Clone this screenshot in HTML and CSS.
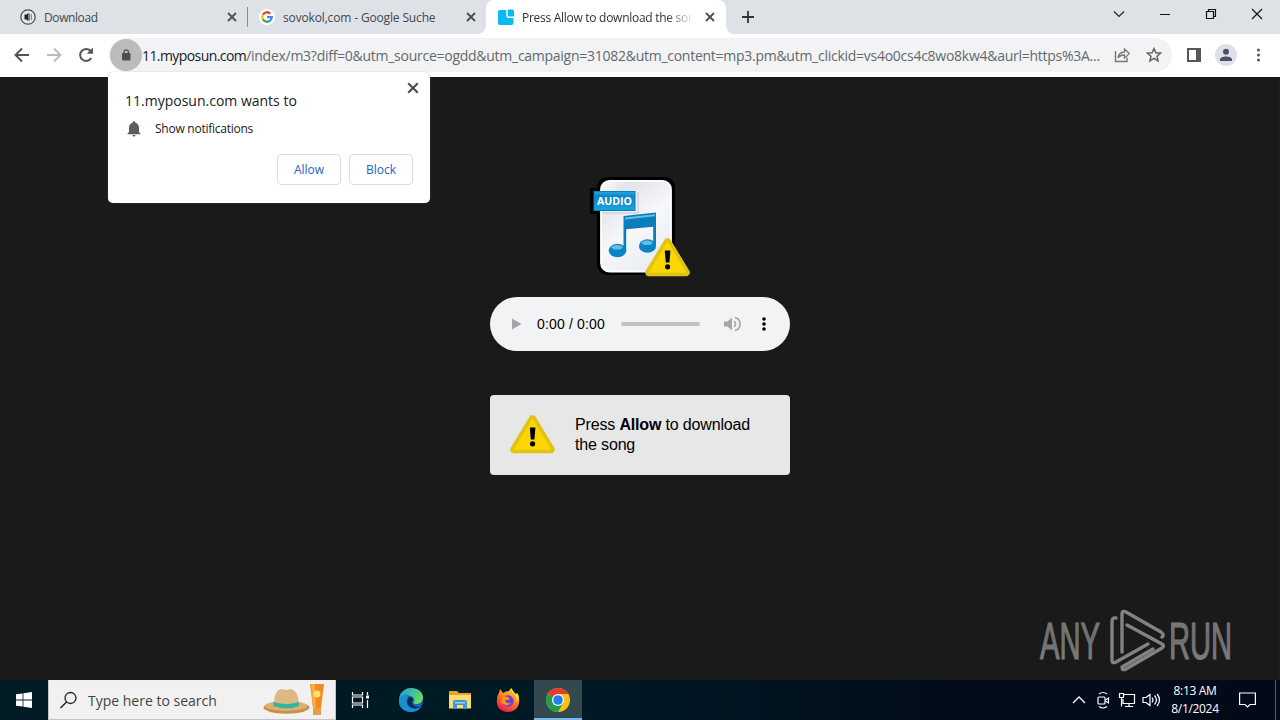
FILE: index.html
```html
<!DOCTYPE html>
<html lang="en">
<head>
<meta charset="utf-8">
<title>Press Allow to download the song</title>
<link rel="stylesheet" href="styles.css">
</head>
<body>
<svg width="0" height="0" class="defs">
  <defs>
    <symbol id="x" viewBox="0 0 10 10"><path d="M1 1l8 8M9 1L1 9" stroke="#4a4d51" stroke-width="1.8"/></symbol>
    <symbol id="warn" viewBox="0 0 45 39"><path d="M22.5 4L41 34.5H4z" fill="#fbd500" stroke="#e0c414" stroke-width="7.5" stroke-linejoin="round"/><path d="M22.5 5L40 34H5z" fill="#fcd600" stroke="#fcd600" stroke-width="1.5" stroke-linejoin="round"/><path d="M19.800 12.500h5.600l-1 12h-3.600z"/><circle cx="22.600" cy="28.800" r="2.600"/></symbol>
  </defs>
</svg>
<div class="screen">
  <header class="tabs">
    <div class="tab first">
      <svg width="16" height="16" viewBox="0 0 16 16"><circle cx="8" cy="8" r="7.200" fill="#e6e7ea" stroke="#484b50" stroke-width="1.2"/><path d="M4.500 5.500h2l2-1.800v8.600l-2-1.800h-2z" fill="#222"/><path d="M9.500 4.500v7M11.300 5v6" stroke="#777"/></svg>
      <span class="title t1">Download</span><svg class="close" width="10" height="10"><use href="#x"/></svg>
    </div>
    <div class="tab second">
      <svg width="16" height="16" viewBox="0 0 16 16"><circle cx="8" cy="8" r="8" fill="#fff"/><g fill="none" stroke-width="2.300"><path d="M3.900 5.700A4.700 4.700 0 0 1 11.300 4.600" stroke="#ea4335"/><path d="M3.900 10.300a4.700 4.700 0 0 1 0-4.600" stroke="#fbbc05"/><path d="M11.200 11.500a4.700 4.700 0 0 1-7.300-1.200" stroke="#34a853"/><path d="M8 8.100h4.800c0 1.500-.6 2.600-1.600 3.400" stroke="#4285f4"/></g></svg>
      <span class="title t2">sovokol,com - Google Suche</span><svg class="close" width="10" height="10"><use href="#x"/></svg>
    </div>
    <div class="tab active">
      <svg width="16" height="16" viewBox="0 0 16 16"><path d="M2 1h6.300v5.500q0 2.500 2.500 2.500H15.500v5q0 2-2 2H2q-2 0-2-2V3q0-2 2-2z" fill="#08b9f3"/><path d="M9.800.5H14q2 0 2 2V7.500h-4.700q-1.500 0-1.500-1.500z" fill="#08b9f3"/></svg>
      <span class="title t3">Press Allow to download the song</span><svg class="close" width="10" height="10"><use href="#x"/></svg>
    </div>
    <svg class="plus" width="12" height="12" viewBox="0 0 12 12"><path d="M6 0v12M0 6h12" stroke="#303338" stroke-width="1.800"/></svg>
    <div class="caption">
      <svg width="46" height="28" viewBox="0 0 46 28"><path d="M18 11.500l5 5 5-5" fill="none" stroke="#222" stroke-width="1.200"/></svg>
      <svg width="46" height="28" viewBox="0 0 46 28"><path d="M18 14.500h10" stroke="#111"/></svg>
      <svg width="46" height="28" viewBox="0 0 46 28"><path d="M18.500 11.500h7v7h-7zM20.500 11.500v-2h7v7h-2" fill="none" stroke="#111" stroke-width="1.200"/></svg>
      <svg width="46" height="28" viewBox="0 0 46 28"><path d="M18 9l10 10M28 9L18 19" stroke="#111" stroke-width="1.200"/></svg>
    </div>
  </header>
  <div class="toolbar">
    <svg width="32" height="32" viewBox="0 0 32 32"><path d="M23 16H10M16 9.500L9.500 16l6.500 6.500" fill="none" stroke="#4f5256" stroke-width="1.900"/></svg>
    <svg width="32" height="32" viewBox="0 0 32 32"><path d="M9 16h13M16 9.500l6.500 6.500-6.500 6.500" fill="none" stroke="#b9bbbd" stroke-width="1.900"/></svg>
    <svg width="32" height="32" viewBox="0 0 32 32"><path d="M21.300 19a6 6 0 1 1-.8-7.200" fill="none" stroke="#54575b" stroke-width="2"/><path d="M23 8.500v6.300h-6.300z" fill="#54575b"/></svg>
    <div class="omnibox">
      <span class="lock"><svg width="10" height="12" viewBox="0 0 10 12"><rect x="1" y="4" width="8.500" height="7.500" rx="1" fill="#4b4e50"/><path d="M3 5V3a2.200 2.200 0 0 1 4.400 0v2" fill="none" stroke="#4b4e50" stroke-width="1.300"/></svg></span>
      <span class="url"><b>11.myposun.com</b><i>/index/m3?diff=0&amp;utm_source=ogdd&amp;utm_campaign=31082&amp;utm_content=mp3.pm&amp;utm_clickid=vs4o0cs4c8wo8kw4&amp;aurl=https%3A...</i></span>
      <svg width="32" height="32" viewBox="0 0 32 32"><path d="M9.500 12v10.500H21v-4" fill="none" stroke="#74777b" stroke-width="1.400"/><path d="M12 19c.6-4 3-5.800 6.500-6v-3l4.800 4.600-4.800 4.500V16c-3 0-5 .8-6.500 3z" fill="none" stroke="#74777b" stroke-width="1.300"/></svg>
      <svg width="32" height="32" viewBox="0 0 32 32"><path d="M16 9.500l1.900 4.300 4.700.4-3.600 3.100 1.100 4.600-4.100-2.500-4.100 2.500 1.100-4.600-3.600-3.100 4.700-.4z" fill="none" stroke="#5f6368" stroke-width="1.500"/></svg>
    </div>
    <svg class="panel" width="32" height="32" viewBox="0 0 32 32"><path d="M9 9h14v14H9zM11 11v10h7V11z" fill="#54585b" fill-rule="evenodd"/></svg>
    <svg width="32" height="32" viewBox="0 0 32 32"><circle cx="16" cy="16" r="11" fill="#dfe1e9"/><circle cx="16" cy="12.700" r="3" fill="#4f5266"/><path d="M10 22v-1.600c0-4 12-4 12 0V22z" fill="#4f5266"/></svg>
    <svg width="32" height="32" viewBox="0 0 32 32"><g fill="#54575b"><circle cx="16.500" cy="11" r="1.500"/><circle cx="16.500" cy="16" r="1.500"/><circle cx="16.500" cy="21" r="1.500"/></g></svg>
  </div>
  <main class="page">
    <svg class="audio" width="100" height="100" viewBox="0 0 100 100">
      <defs><linearGradient id="paper" x2="0.600" y2="1"><stop stop-color="#fff"/><stop offset=".2" stop-color="#e2e4e9"/><stop offset=".6" stop-color="#f7f8fa"/><stop offset="1" stop-color="#e9edf3"/></linearGradient><linearGradient id="blue" x2="0" y2="1"><stop stop-color="#29a9df"/><stop offset=".25" stop-color="#0a84c6"/><stop offset="1" stop-color="#19a4df"/></linearGradient></defs>
      <path d="M19 0h55q11 0 11 11v75q0 12-11 12H20Q7 98 7 86V37H0V11h7Q8 0 19 0z" fill="#000"/>
      <rect x="11" y="4" width="70" height="90.500" rx="8.500" fill="url(#paper)" stroke="#fff" stroke-width="1.800"/>
      <path d="M12 36h36V15" fill="none" stroke="#c2c6cc"/>
      <rect x="4" y="14.500" width="41" height="19" fill="url(#blue)" stroke="#087ebd"/>
      <text x="7" y="28.300" textLength="35" lengthAdjust="spacingAndGlyphs" font-family="Open Sans, sans-serif" font-size="10.500" font-weight="700" fill="#fff">AUDIO</text>
      <path d="M33.500 39L66 35.500V69h-2.800V49.700l-27 2.600V74h-2.700z" fill="#087ebd"/><ellipse cx="27.500" cy="73.500" rx="8.800" ry="6.800" fill="#0885c8"/><ellipse cx="57.500" cy="69" rx="8.600" ry="6.800" fill="#0885c8"/><path d="M35 40.500l30-3.200v2L35 42.500z" fill="#66bee8"/><ellipse cx="27" cy="70.300" rx="5.500" ry="2.300" fill="#64bce7"/><ellipse cx="57" cy="65.800" rx="5.500" ry="2.300" fill="#64bce7"/>
      <use href="#warn" x="55" y="61" width="45" height="39"/>
    </svg>
    <div class="player">
      <svg width="10" height="12" viewBox="0 0 10 12"><path d="M0 .5L9.500 6 0 11.500z" fill="#a3a6a8"/></svg>
      <span class="time">0:00 / 0:00</span><span class="track"></span>
      <svg class="vol" width="17" height="16" viewBox="0 0 17 16"><path d="M0 5.500h3.500L8 1.500v13l-4.500-4H0z" fill="#a3a6a8"/><path d="M10 5q3 3 0 6M11 1.500a6.700 6.700 0 0 1 0 13" fill="none" stroke="#a3a6a8" stroke-width="1.600"/></svg>
      <svg class="dots" width="4" height="14" viewBox="0 0 4 14"><circle cx="2" cy="2" r="1.800"/><circle cx="2" cy="7" r="1.800"/><circle cx="2" cy="12" r="1.800"/></svg>
    </div>
    <div class="notice"><svg width="45" height="39"><use href="#warn"/></svg><p>Press <strong>Allow</strong> to download<br>the song</p></div>
    <svg class="brand" width="200" height="66" viewBox="0 0 200 66">
      <defs><linearGradient id="metal" x2="0" y2="1"><stop stop-color="#828282"/><stop offset=".45" stop-color="#6d6d6d"/><stop offset="1" stop-color="#858585"/></linearGradient></defs>
      <g font-family="Liberation Sans, sans-serif" font-size="52" fill="url(#metal)" stroke="#797979" stroke-width="1.200"><text x="4" y="51.500" textLength="60" lengthAdjust="spacingAndGlyphs">ANY</text><text x="133" y="51.500" textLength="63" lengthAdjust="spacingAndGlyphs">RUN</text></g>
      <g fill="none" stroke="#828282" stroke-width="3.400" stroke-linejoin="round" stroke-linecap="round"><path d="M80 11q-4-1-4 4v38q0 4 4 2l32-18"/><path d="M86 45V7q0-4 4-2l35 20q4 3 1 5M91 18l35 19q3 2 0 4L90 62q-4 2-4-2l31-18"/></g>
    </svg>
    <span class="edge"></span>
  </main>
  <footer class="taskbar">
    <div class="start"><svg width="16" height="16" viewBox="0 0 16 16" fill="#fff"><path d="M0 2.300L6.600 1.400v6.100H0zM7.400 1.300L16 0v7.500H7.400zM0 8.500h6.600v6.100L0 13.700zM7.400 8.500H16V16l-8.600-1.300z"/></svg></div>
    <div class="search"><svg width="18" height="18" viewBox="0 0 18 18"><circle cx="10.500" cy="7" r="5.500" fill="none" stroke="#222" stroke-width="1.300"/><path d="M6.500 11l-6 6" stroke="#222" stroke-width="1.400"/></svg><span>Type here to search</span>
      <svg class="hat" width="64" height="36" viewBox="0 0 64 36"><ellipse cx="23.500" cy="25.500" rx="23" ry="6.200" fill="#c99049"/><ellipse cx="23" cy="24" rx="21" ry="5" fill="#dfb06d"/><path d="M11 24c0-8 1-16 7-17 4 1 6 1 10 0 6 1 8 9 8 17-5 4-20 4-25 0z" fill="#deb984"/><path d="M10.500 20q13 4 25.500 0v4q-12 5-25.500 0z" fill="#35b69c"/><path d="M47 2h14l-3 24h-8z" fill="#f18a1f"/><path d="M48 2h4l1 24h-3z" fill="#f9ad42"/><circle cx="54" cy="12" r="3.500" fill="#ffe06a"/><path d="M50 26h8v7h-8z" fill="#e89c45"/></svg>
    </div>
    <div class="app view"><svg width="18" height="16" viewBox="0 0 18 16"><path d="M1.500 0v3h10V0M1.500 16v-3h10v3M1.500 5h10v6h-10zM16.500 0v3M16.500 8v8" fill="none" stroke="#fff" stroke-width="1.200"/><path d="M15 3.500h3v3h-3z" fill="#fff"/></svg></div>
    <div class="app edgeapp"><svg width="24" height="24" viewBox="0 0 24 24"><defs><linearGradient id="eg" y2=".6"><stop stop-color="#229bd9"/><stop offset="1" stop-color="#66dc62"/></linearGradient></defs><circle cx="12" cy="12" r="12" fill="#1264b5"/><path d="M.2 11C1 4 6 0 12 0c7 0 12 4 12 9.500 0 4-3 6.500-7 6.500-2 0-3.500-.8-2-2.500C17 10 11 6 6 8q-4 1-5.800 3z" fill="url(#eg)"/><path d="M0 12c1-5 7-7 11-5-4 2-5 8-1 11 4 4 9 2 12 1-2 3-6 5-10 5C5 24-1 19 0 12z" fill="#1b8ed3"/><path d="M10.500 9c-3 3-3 7 0 9.500 4 3 8 2 11 .5-3 0-8 0-8.500-4.500-.1-1 2-3 0-5z" fill="#082c4f"/></svg></div>
    <div class="app"><svg width="22" height="20" viewBox="0 0 22 20"><path d="M0 1h8l2 2h12v15H0z" fill="#e6a32b"/><path d="M0 5h22v13.500H0z" fill="#ffdc73"/><path d="M4 19v-7q0-2 2-2h10q2 0 2 2v7h-4v-4H8v4z" fill="#3c9bd7"/><path d="M6 12h10v1.500H6z" fill="#96d2ef"/></svg></div>
    <div class="app"><svg width="24" height="24" viewBox="0 0 24 24"><defs><linearGradient id="ff" x1=".8" x2=".3" y2="1"><stop stop-color="#ffdf35"/><stop offset=".5" stop-color="#ff7b20"/><stop offset="1" stop-color="#ef174f"/></linearGradient></defs><path d="M3 5l1-4 3 4q3-2 6-2l2-3 4 6 1-1q4 4 3 10c-1 6-6 9-11 9C5 24 0 19 1 12q0-5 2-7z" fill="url(#ff)"/><circle cx="12" cy="13" r="5.700" fill="#6f3fcf"/><path d="M7 8l5 1q3 2 0 3H9q1 4 6 3-5 5-10-1z" fill="#ff921f"/><path d="M15 0c0 5 8 8 5 14 3-2 4-6 1-9l-1 2z" fill="#ffe042"/></svg></div>
    <div class="app current"><svg width="24" height="24" viewBox="0 0 24 24"><circle cx="12" cy="12" r="12" fill="#fbc116"/><path d="M12 12L1.600 6A12 12 0 0 1 22.400 6z" fill="#e33b2e"/><path d="M1.600 6A12 12 0 0 0 12 24l5.200-9L12 12z" fill="#229b4b"/><path d="M12 6h10.400l-5.200 9z" fill="#fbc116"/><circle cx="12" cy="12" r="6" fill="#fff"/><circle cx="12" cy="12" r="4.800" fill="#277ce8"/></svg></div>
    <div class="tray">
      <svg width="24" height="20" viewBox="0 0 24 20"><path d="M6 13l6-6 6 6" fill="none" stroke="#fff" stroke-width="1.300"/></svg>
      <svg width="24" height="20" viewBox="0 0 24 20" fill="none" stroke="#fff" stroke-width="1.200"><rect x="7" y="7" width="7" height="7" rx="1"/><path d="M14.500 10l3-2v5l-3-2M8 4q4-3 8 0M8 16.500q4 3 8 0"/></svg>
      <svg width="24" height="20" viewBox="0 0 24 20" fill="none" stroke="#fff" stroke-width="1.200"><path d="M9 4.500h10.500v9H8V9M14 13.500v3M10 16.500h8M4.500 3.500h4v4h-4zM6.500 7.500v9"/></svg>
      <svg width="24" height="20" viewBox="0 0 24 20" fill="none" stroke="#fff" stroke-width="1.200"><path d="M4 7.500h3l4-3v11l-4-3H4zM13 7.500q2 2.500 0 5M15.500 5.500q4 4.500 0 9M18 4q5 6 0 12"/></svg>
      <div class="clock"><span>8:13 AM</span><span>8/1/2024</span></div>
      <svg class="msg" width="17" height="16" viewBox="0 0 17 16"><path d="M.6 1h15.800v11.500H11L8.500 15 6 12.500H.6z" fill="none" stroke="#fff" stroke-width="1.200"/></svg>
      <i class="desk"></i>
    </div>
  </footer>
  <section class="dialog">
    <svg class="dclose" width="12" height="12" viewBox="0 0 10 10"><use href="#x"/></svg>
    <h1><span>11.myposun.com wants to</span></h1>
    <div class="perm"><svg width="14" height="16" viewBox="0 0 14 16"><path d="M7 0q1.400 0 1.400 1.700C11 2.500 12 4.300 12 7v4l1.500 1.500v.8H.5v-.8L2 11V7c0-2.700 1-4.500 3.600-5.300Q5.600 0 7 0zM5.500 14h3Q8.500 15.500 7 15.500T5.500 14z" fill="#5b5e61"/></svg><span>Show notifications</span></div>
    <div class="buttons"><button>Allow</button><button>Block</button></div>
  </section>
</div>
</body>
</html>
```
FILE: styles.css
```css
* { box-sizing: border-box; }
body { margin: 0; font-family: "Open Sans", sans-serif; }
svg { display: block; flex: none; }
.defs { position: absolute; }
.screen { position: relative; width: 1280px; height: 720px; overflow: hidden; display: flex; flex-direction: column; }
.tabs { height: 34px; background: #dee1e6; display: flex; padding-left: 8px; flex: none; }
.tab { display: flex; align-items: center; height: 34px; padding: 0 11px 0 12px; font-size: 12px; color: #45484d; white-space: nowrap; }
.first { width: 240px; position: relative; }
.first::after { content: ""; position: absolute; right: 0; top: 7px; width: 1px; height: 20px; background: #888b90; }
.second { width: 238px; padding-left: 11px; padding-right: 10px; }
.active { width: 240px; background: #fff; border-radius: 8px 8px 0 0; color: #303338; position: relative; }
.active::before, .active::after { content: ""; position: absolute; bottom: 0; width: 8px; height: 8px; }
.active::before { left: -8px; background: radial-gradient(circle at 0 0, #dee1e6 7.5px, #fff 8px); }
.active::after { right: -8px; background: radial-gradient(circle at 100% 0, #dee1e6 7.5px, #fff 8px); }
.title { margin-left: 8px; overflow: hidden; }
.t1 { letter-spacing: -.4px; }
.t2 { letter-spacing: -.15px; }
.t3 { width: 170px; letter-spacing: -.28px; mask-image: linear-gradient(90deg, #000 145px, transparent 172px); }
.close { margin-left: auto; }
.plus { margin: 11px 0 0 16px; }
.caption { display: flex; margin-left: auto; }
.toolbar { height: 43px; background: #fff; display: flex; align-items: center; padding: 0 6px 1px; flex: none; }
.omnibox { display: flex; align-items: center; width: 1063px; height: 34px; border-radius: 17px; background: #f1f3f4; margin-left: 7px; }
.lock { width: 32px; height: 32px; margin-left: 1px; border-radius: 50%; background: #babcbc; display: flex; align-items: center; justify-content: center; flex: none; }
.url { width: 964px; font-size: 14px; white-space: nowrap; flex: none; }
.url b { font-weight: 400; color: #202124; letter-spacing: -.58px; }
.url i { font-style: normal; color: #65696d; letter-spacing: -.265px; }
.panel { margin-left: 6px; }
.page { height: 603px; background: #1a1a1a; display: flex; flex-direction: column; align-items: center; position: relative; flex: none; }
.audio { margin-top: 100px; }
.player { width: 300px; height: 54px; border-radius: 27px; background: #f1f3f4; margin-top: 20px; display: flex; align-items: center; padding-left: 22px; }
.time { width: 84px; margin-left: 15px; font: 14px "Liberation Sans", Arial, sans-serif; letter-spacing: .15px; }
.track { width: 79px; height: 4px; border-radius: 2px; background: #c0c2c3; }
.vol { margin-left: 24px; }
.dots { margin-left: 21px; }
.notice { width: 300px; height: 80px; background: #e7e7e7; border-radius: 4px; margin-top: 44px; display: flex; align-items: center; padding-left: 20px; }
.notice svg { margin-top: -2px; }
.notice p { margin: 0 0 0 20px; font: 16px/20px "Liberation Sans", Arial, sans-serif; letter-spacing: -.16px; color: #000; }
.brand { position: absolute; left: 1036px; top: 530px; overflow: visible; }
.edge { position: absolute; right: 0; top: 0; width: 1px; height: 603px; background: #202020; }
.taskbar { height: 40px; background: linear-gradient(90deg, #001b24, #001a25 45%, #020c1b 75%, #020a18); display: flex; flex: none; }
.start { width: 48px; display: flex; align-items: center; justify-content: center; }
.search { width: 288px; background: #f1f1f1; border: 1px solid #c4c4c4; border-top-color: #eee; display: flex; align-items: center; padding-left: 11px; font-size: 14px; color: #444; white-space: nowrap; }
.search span { margin-left: 10px; }
.hat { margin-left: auto; margin-right: 8px; }
.app { width: 49px; display: flex; align-items: center; justify-content: center; }
.view { width: 48px; }
.edgeapp { width: 54px; }
.edgeapp + .app { width: 44px; }
.edgeapp + .app + .app { width: 52px; }
.app.current { width: 48px; background: #344850; box-shadow: inset 0 -2px #76b9ed; }
.tray { margin-left: auto; display: flex; align-items: center; }
.clock { width: 64px; display: flex; flex-direction: column; align-items: center; font-size: 12px; line-height: 18px; color: #fff; letter-spacing: -.33px; }
.msg { margin-left: 12px; }
.desk { width: 1px; height: 40px; margin: 0 4px 0 19px; background: #525b66; }
.dialog { position: absolute; left: 108px; top: 72px; width: 322px; height: 131px; background: #fff; border-radius: 5px; box-shadow: 0 0 1px #888; padding: 18px 17px; display: flex; flex-direction: column; }
.dclose { position: absolute; right: 11px; top: 10px; }
.dialog h1 { font-size: 14px; line-height: 22px; font-weight: 400; margin: 0; color: #202124; }
.perm { display: flex; align-items: center; gap: 14px; height: 18px; margin-top: 8px; padding-left: 2px; font-size: 12px; letter-spacing: -.25px; color: #202124; }
.buttons { display: flex; justify-content: flex-end; gap: 8px; margin-top: 17px; }
.buttons button { width: 64px; height: 31px; border: 1px solid #dadce0; border-radius: 4px; background: #fff; color: #2165be; font: 500 12px "Open Sans", sans-serif; padding: 0; }
```
